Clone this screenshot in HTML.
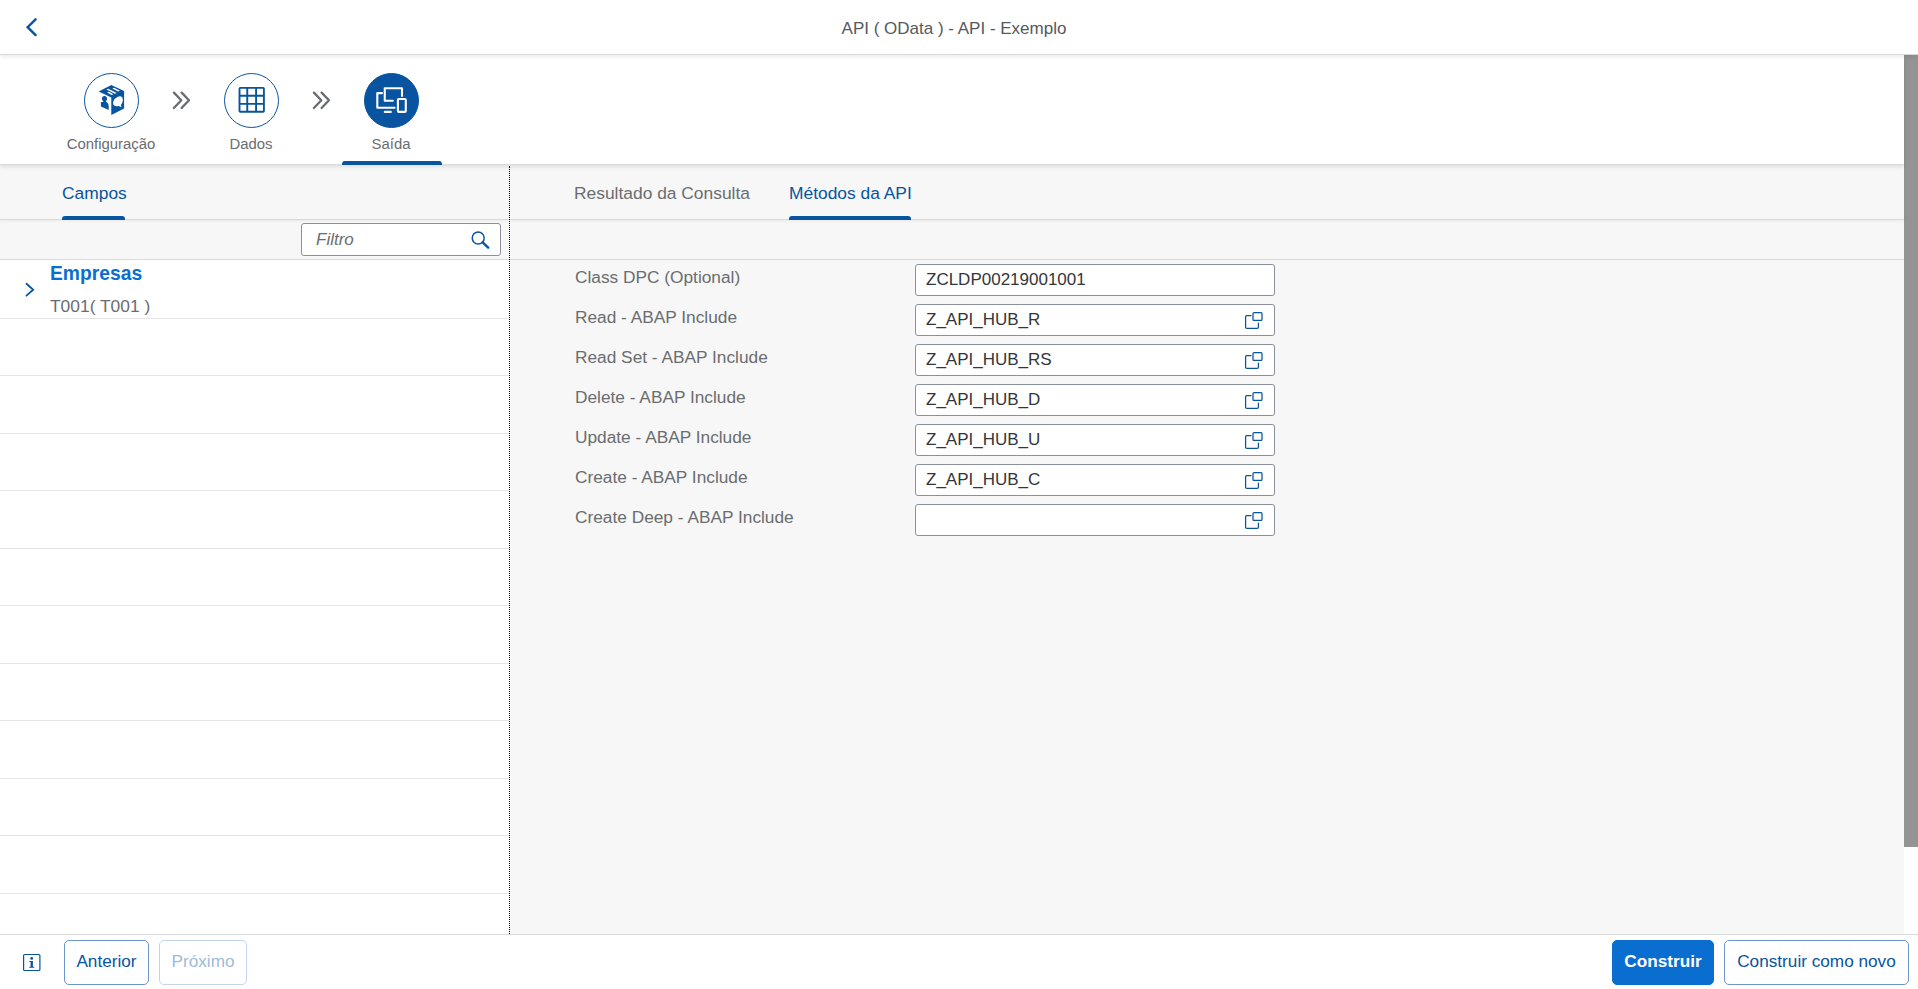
<!DOCTYPE html>
<html><head><meta charset="utf-8">
<style>
*{box-sizing:border-box;margin:0;padding:0}
html,body{width:1918px;height:989px;overflow:hidden;background:#fff;font-family:"Liberation Sans",sans-serif;color:#32363a}
.abs{position:absolute}
#hdr{position:absolute;left:0;top:0;width:1918px;height:55px;background:#fff;box-shadow:inset 0 -1px 0 #d9d9d9,0 2px 4px rgba(0,0,0,0.08);z-index:3}
#title{position:absolute;left:2px;width:1904px;top:19px;text-align:center;font-size:17px;color:#55595e;line-height:20px}
#wiz{position:absolute;left:0;top:55px;width:1904px;height:110px;background:#fff;box-shadow:inset 0 -1px 0 #d9d9d9,0 2px 4px rgba(0,0,0,0.1);z-index:2}
.step{position:absolute;top:18px;width:55px;height:55px;border-radius:50%;border:1px solid #0854a0;background:#fff}
.step.act{background:#0854a0}
.slbl{position:absolute;top:80px;width:140px;text-align:center;font-size:14.9px;color:#6a6d70;line-height:18px}
#left{position:absolute;left:0;top:165px;width:509px;height:769px;background:#fff}
#right{position:absolute;left:510px;top:165px;width:1394px;height:769px;background:#f7f7f7}
.tabbar{position:absolute;left:0;top:0;right:0;height:55px;background:#f7f7f7;box-shadow:inset 0 -1px 0 #d9d9d9,0 1px 3px rgba(0,0,0,0.06);z-index:1}
.tab{position:absolute;top:18px;font-size:17.4px;line-height:20px;color:#6a6d70;white-space:nowrap}
.tab.sel{color:#0854a0}
.uline{position:absolute;top:51px;height:4px;background:#0854a0;border-radius:3px 3px 0 0}
.tbar{position:absolute;left:0;top:55px;right:0;height:40px;background:#f7f7f7;box-shadow:inset 0 -1px 0 #d9d9d9}
.row{position:absolute;left:0;width:509px;height:1px;background:#e5e5e5}
#divider{position:absolute;left:509px;top:166px;width:1px;height:768px;border-left:1px dotted #000}
.lbl{position:absolute;left:65px;font-size:17.3px;color:#6a6d70;line-height:20px;white-space:nowrap}
.inp{position:absolute;left:405px;width:360px;height:32px;border:1px solid #89919a;border-radius:3px;background:#fff}
.inp span{position:absolute;left:10px;top:5px;font-size:17px;line-height:20px;color:#32363a}
.inp svg{position:absolute;left:329px;top:6px}
#foot{position:absolute;left:0;top:934px;width:1918px;height:55px;background:#fff;box-shadow:inset 0 1px 0 #d9d9d9}
.btn{position:absolute;top:6px;height:45px;border:1px solid #6b97cc;border-radius:5px;background:#fff;color:#0854a0;font-size:17.2px;line-height:41px;text-align:center;white-space:nowrap}
#sb{position:absolute;left:1904px;top:55px;width:14px;height:792px;background:#949494}
</style></head><body>
<div id="hdr">
  <svg class="abs" style="left:20px;top:13px" width="24" height="28" viewBox="0 0 24 28"><path d="M15.6 6.3 L7.6 14.2 L15.6 22.1" fill="none" stroke="#0854a0" stroke-width="2.4" stroke-linecap="round" stroke-linejoin="miter"/></svg>
  <div id="title">API ( OData ) - API - Exemplo</div>
</div>
<div id="wiz">
  <div class="step" style="left:84px"></div>
  <div class="slbl" style="left:41px">Configuração</div>
  <div class="step" style="left:224px"></div>
  <div class="slbl" style="left:181px">Dados</div>
  <div class="step act" style="left:364px"></div>
  <div class="slbl" style="left:321px">Saída</div>
  <div class="abs" style="left:342px;top:106px;width:100px;height:4px;background:#0854a0;border-radius:3px 3px 0 0"></div>
</div>
<div id="left">
  <div class="tabbar">
    <div class="tab sel" style="left:62px">Campos</div>
    <div class="uline" style="left:62px;width:63px"></div>
  </div>
  <div class="tbar">
    <div class="abs" style="left:301px;top:3px;width:200px;height:33px;border:1px solid #89919a;border-radius:3px;background:#fff">
      <span class="abs" style="left:14px;top:6px;font-size:17px;line-height:20px;font-style:italic;color:#6a6d70">Filtro</span>
    </div>
  </div>
  <div class="row" style="top:153px"></div>
  <div class="row" style="top:210px"></div>
  <div class="row" style="top:268px"></div>
  <div class="row" style="top:325px"></div>
  <div class="row" style="top:383px"></div>
  <div class="row" style="top:440px"></div>
  <div class="row" style="top:498px"></div>
  <div class="row" style="top:555px"></div>
  <div class="row" style="top:613px"></div>
  <div class="row" style="top:670px"></div>
  <div class="row" style="top:728px"></div>
  <div class="abs" style="left:50px;top:98px;font-size:19.3px;line-height:22px;font-weight:bold;color:#0a6ed1">Empresas</div>
  <div class="abs" style="left:50px;top:131px;font-size:17.4px;line-height:20px;color:#6a6d70;white-space:nowrap">T001( T001 )</div>
</div>
<div id="divider"></div>
<div id="right">
  <div class="tabbar">
    <div class="tab" style="left:64px">Resultado da Consulta</div>
    <div class="tab sel" style="left:279px">Métodos da API</div>
    <div class="uline" style="left:279px;width:122px"></div>
  </div>
  <div class="tbar"></div>
  <div class="lbl" style="top:102px">Class DPC (Optional)</div>
  <div class="inp" style="top:99px"><span>ZCLDP00219001001</span></div>
  <div class="lbl" style="top:142px">Read - ABAP Include</div>
  <div class="inp" style="top:139px"><span>Z_API_HUB_R</span></div>
  <div class="lbl" style="top:182px">Read Set - ABAP Include</div>
  <div class="inp" style="top:179px"><span>Z_API_HUB_RS</span></div>
  <div class="lbl" style="top:222px">Delete - ABAP Include</div>
  <div class="inp" style="top:219px"><span>Z_API_HUB_D</span></div>
  <div class="lbl" style="top:262px">Update - ABAP Include</div>
  <div class="inp" style="top:259px"><span>Z_API_HUB_U</span></div>
  <div class="lbl" style="top:302px">Create - ABAP Include</div>
  <div class="inp" style="top:299px"><span>Z_API_HUB_C</span></div>
  <div class="lbl" style="top:342px">Create Deep - ABAP Include</div>
  <div class="inp" style="top:339px"><span></span></div>
</div>
<div id="foot">
  <div class="btn" style="left:64px;width:85px">Anterior</div>
  <div class="btn" style="left:159px;width:88px;opacity:0.4">Próximo</div>
  <div class="btn" style="left:1612px;width:102px;background:#0a6ed1;border-color:#0a6ed1;color:#fff;font-weight:bold">Construir</div>
  <div class="btn" style="left:1724px;width:185px">Construir como novo</div>
</div>
<div id="sb"></div>
<svg id="ov" width="1918" height="989" viewBox="0 0 1918 989" style="position:absolute;left:0;top:0;z-index:10;pointer-events:none">
 <!-- cube icon -->
 <g fill="#0854a0">
  <path d="M111.3 85.1 L124.1 91.1 L124.1 108.6 L111.3 114.9 L111.3 97.4 L98.7 91.5 Z"/>
  <path d="M104.4 95.9 C106.2 95.9 107.2 97.3 107.1 98.8 C107 100.1 106.3 100.9 105.8 101.3 L106.3 102.1 C107.6 102.5 108.7 104.2 108.7 106.2 L108.7 110.1 L100.9 106.6 L100.9 101.9 L103.2 101.9 L103.3 101 C102.5 100.5 101.9 99.6 101.9 98.4 C101.9 96.9 103 95.9 104.4 95.9 Z"/>
 </g>
 <g fill="#fff">
  <path d="M106.4 89.6 L108.2 88.8 L116.7 92.9 L114.9 93.7 Z"/>
  <path d="M112.3 88.6 L114.1 87.8 L119.9 90.7 L118.1 91.5 Z"/>
  <path d="M107.1 92.6 L108.9 91.8 L113.4 94.2 L111.6 95 Z"/>
  <path d="M119.2 96.4 C121.8 96 122.9 97.8 122.8 100.2 C122.7 102.4 121.6 104.2 120.8 104.9 L121.6 107.2 L118.6 105.9 C116.2 106.6 113.3 106.1 113.1 103.5 C112.9 100.2 115.6 97 119.2 96.4 Z"/>
 </g>
 <!-- chevrons -->
 <g fill="none" stroke="#6a6d70" stroke-width="2.3" stroke-linecap="round" stroke-linejoin="round">
  <path d="M173.9 92.6 L181.3 100.3 L173.9 108"/><path d="M181.6 92.6 L189 100.3 L181.6 108"/>
  <path d="M313.9 92.6 L321.3 100.3 L313.9 108"/><path d="M321.6 92.6 L329 100.3 L321.6 108"/>
 </g>
 <!-- grid icon -->
 <g fill="none" stroke="#0854a0" stroke-width="1.9">
  <rect x="239.5" y="87.9" width="24.4" height="23.8" rx="0.8"/>
  <path d="M247.25 88 V111.7 M256.1 88 V111.7 M239.5 95.75 H263.9 M239.5 103.9 H263.9"/>
 </g>
 <!-- devices icon -->
 <g fill="none" stroke="#fff" stroke-width="2.1" stroke-linecap="round" stroke-linejoin="round">
  <path d="M402 96 L402 88.2 L384.75 88.2 L384.75 100.7 L392.8 100.7"/>
  <path d="M382 93.1 L377.3 93.1 L377.3 107.8 L394.6 107.8"/>
  <path d="M384.8 111.9 L390.8 111.9"/>
  <rect x="397.9" y="99" width="7.9" height="12.9" rx="1"/>
 </g>
 <!-- list chevron -->
 <path d="M26.5 283.8 L33.2 289.7 L26.5 295.6" fill="none" stroke="#0854a0" stroke-width="1.8" stroke-linecap="round"/>
 <!-- search icon -->
 <g fill="none" stroke="#0854a0">
  <circle cx="478.2" cy="238" r="6" stroke-width="1.5"/>
  <path d="M482.6 242.4 L488.2 247.6" stroke-width="2.4" stroke-linecap="round"/>
 </g>
 <!-- info icon -->
 <rect x="23.6" y="954.5" width="16.3" height="16" rx="1" fill="none" stroke="#0854a0" stroke-width="1.2"/>
 <circle cx="31.7" cy="958.4" r="1.4" fill="#0854a0"/>
 <path d="M29.3 961.1 H32.9 V966.8 H34.3 V967.8 H29.2 V966.8 H30.6 V962 H29.3 Z" fill="#0854a0"/>
 <g transform="translate(0,0)" fill="none" stroke="#0854a0" stroke-width="1.25" stroke-linecap="round"><path d="M1251 315.6 L1246.7 315.6 Q1245.6 315.6 1245.6 316.7 L1245.6 327.3 Q1245.6 328.4 1246.7 328.4 L1257.3 328.4 Q1258.4 328.4 1258.4 327.3 L1258.4 323"/><rect x="1253" y="312.5" width="9" height="7.9" rx="1"/></g>
 <g transform="translate(0,40)" fill="none" stroke="#0854a0" stroke-width="1.25" stroke-linecap="round"><path d="M1251 315.6 L1246.7 315.6 Q1245.6 315.6 1245.6 316.7 L1245.6 327.3 Q1245.6 328.4 1246.7 328.4 L1257.3 328.4 Q1258.4 328.4 1258.4 327.3 L1258.4 323"/><rect x="1253" y="312.5" width="9" height="7.9" rx="1"/></g>
 <g transform="translate(0,80)" fill="none" stroke="#0854a0" stroke-width="1.25" stroke-linecap="round"><path d="M1251 315.6 L1246.7 315.6 Q1245.6 315.6 1245.6 316.7 L1245.6 327.3 Q1245.6 328.4 1246.7 328.4 L1257.3 328.4 Q1258.4 328.4 1258.4 327.3 L1258.4 323"/><rect x="1253" y="312.5" width="9" height="7.9" rx="1"/></g>
 <g transform="translate(0,120)" fill="none" stroke="#0854a0" stroke-width="1.25" stroke-linecap="round"><path d="M1251 315.6 L1246.7 315.6 Q1245.6 315.6 1245.6 316.7 L1245.6 327.3 Q1245.6 328.4 1246.7 328.4 L1257.3 328.4 Q1258.4 328.4 1258.4 327.3 L1258.4 323"/><rect x="1253" y="312.5" width="9" height="7.9" rx="1"/></g>
 <g transform="translate(0,160)" fill="none" stroke="#0854a0" stroke-width="1.25" stroke-linecap="round"><path d="M1251 315.6 L1246.7 315.6 Q1245.6 315.6 1245.6 316.7 L1245.6 327.3 Q1245.6 328.4 1246.7 328.4 L1257.3 328.4 Q1258.4 328.4 1258.4 327.3 L1258.4 323"/><rect x="1253" y="312.5" width="9" height="7.9" rx="1"/></g>
 <g transform="translate(0,200)" fill="none" stroke="#0854a0" stroke-width="1.25" stroke-linecap="round"><path d="M1251 315.6 L1246.7 315.6 Q1245.6 315.6 1245.6 316.7 L1245.6 327.3 Q1245.6 328.4 1246.7 328.4 L1257.3 328.4 Q1258.4 328.4 1258.4 327.3 L1258.4 323"/><rect x="1253" y="312.5" width="9" height="7.9" rx="1"/></g>
</svg>

</body></html>
